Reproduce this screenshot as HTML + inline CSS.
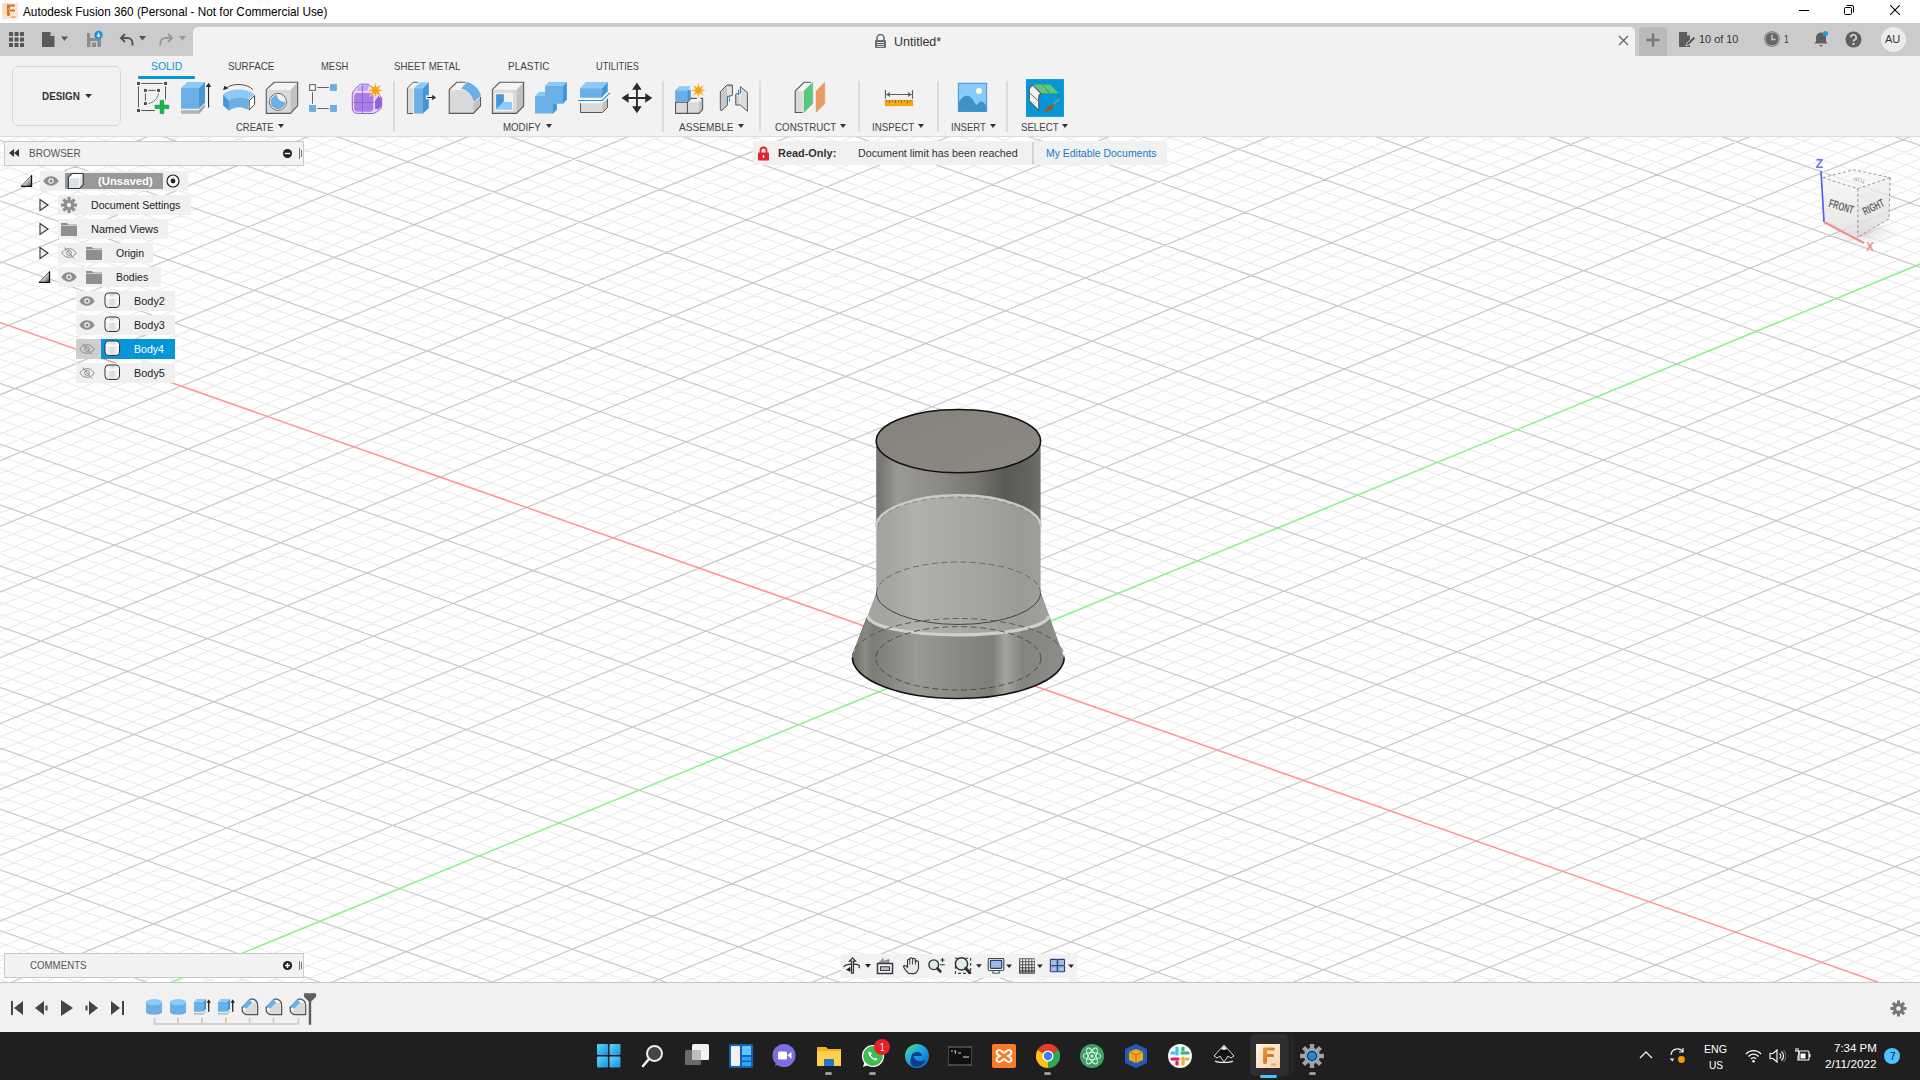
<!DOCTYPE html>
<html><head><meta charset="utf-8"><title>Autodesk Fusion 360</title><style>
*{margin:0;padding:0;box-sizing:border-box}
html,body{width:1920px;height:1080px;overflow:hidden;background:#fff;font-family:"Liberation Sans", sans-serif;}
.abs{position:absolute}
.t{position:absolute;white-space:nowrap;line-height:1}
</style></head>
<body>
<div class="abs" style="left:0;top:0;width:1920px;height:23px;background:#fff"></div>
<svg class="abs" style="left:2px;top:3px" width="16" height="16" viewBox="0 0 16 16">
<rect x="0" y="0" width="16" height="16" fill="#fbe5d0"/><rect x="1" y="1" width="6" height="10" fill="#f8d9bb"/>
<path d="M5 1.6h7a1 1 0 0 1 0 2H8v3h4a1 1 0 0 1 0 2H8v2.8a1.3 1.3 0 0 1-3 0z" fill="#d2731f"/><path d="M6 5l1.5 1.5V10" stroke="#f5b563" stroke-width="1" fill="none"/>
<rect x="9" y="13" width="4.5" height="2" fill="#f0b57c"/></svg>
<div class="t" style="left:23.00px;top:5.00px;font-size:13px;color:#000;transform:scaleX(0.9058);transform-origin:0 0;">Autodesk Fusion 360 (Personal - Not for Commercial Use)</div>
<div class="abs" style="left:1799px;top:10px;width:10px;height:1px;background:#000"></div>
<svg class="abs" style="left:1843px;top:4px" width="12" height="12" viewBox="0 0 12 12" fill="none" stroke="#000" stroke-width="1">
<rect x="1.5" y="3.5" width="7" height="7" rx="1"/><path d="M3.5 1.5h5.5a1.5 1.5 0 0 1 1.5 1.5v5.5"/></svg>
<svg class="abs" style="left:1889px;top:4px" width="12" height="12" viewBox="0 0 12 12" fill="none" stroke="#000" stroke-width="1.05">
<path d="M1.2 1.2L10.8 10.8M10.8 1.2L1.2 10.8"/></svg>
<div class="abs" style="left:0;top:23px;width:1920px;height:33px;background:#cbcbcb"></div>
<div class="abs" style="left:193px;top:27px;width:1442px;height:29px;background:#f2f2f2;border-radius:5px 5px 0 0"></div>
<div class="abs" style="left:1639px;top:27px;width:28px;height:29px;background:#bababa;border-radius:4px 4px 0 0"></div>
<svg class="abs" style="left:9px;top:32px" width="15" height="15" viewBox="0 0 15 15" fill="#555">
<rect x="0" y="0" width="4" height="4" rx=".6"/><rect x="5.5" y="0" width="4" height="4" rx=".6"/><rect x="11" y="0" width="4" height="4" rx=".6"/>
<rect x="0" y="5.5" width="4" height="4" rx=".6"/><rect x="5.5" y="5.5" width="4" height="4" rx=".6"/><rect x="11" y="5.5" width="4" height="4" rx=".6"/>
<rect x="0" y="11" width="4" height="4" rx=".6"/><rect x="5.5" y="11" width="4" height="4" rx=".6"/><rect x="11" y="11" width="4" height="4" rx=".6"/></svg>
<svg class="abs" style="left:41px;top:31px" width="30" height="17" viewBox="0 0 30 17">
<path d="M1 1h8.5l4 4V16H1z" fill="#5a5a5a"/><path d="M9.5 1v4h4" fill="#c9c9c9"/><path d="M20 5.5h7l-3.5 4.5z" fill="#5a5a5a"/></svg>
<svg class="abs" style="left:86px;top:30px" width="17" height="18" viewBox="0 0 17 18">
<path d="M1 3h12l2 2v12H1z" fill="#8c8c8c"/><rect x="4" y="3" width="7" height="5" fill="#c9c9c9"/><rect x="4.5" y="11" width="7" height="6" fill="#c9c9c9"/><rect x="6" y="12.5" width="4" height="4.5" fill="#8c8c8c"/>
<circle cx="12.5" cy="5" r="4.2" fill="#1e90e0"/><path d="M12.5 2.8v3.6M11 5l1.5 1.6L14 5" stroke="#fff" stroke-width="1.2" fill="none"/></svg>
<svg class="abs" style="left:119px;top:31px" width="30" height="16" viewBox="0 0 30 16">
<path d="M6 3L2 7l4 4M2.5 7H8.5a5 5 0 0 1 5 5v2.5" stroke="#555" stroke-width="2" fill="none"/><path d="M20 5h7l-3.5 4.5z" fill="#555"/></svg>
<svg class="abs" style="left:159px;top:31px" width="30" height="16" viewBox="0 0 30 16">
<path d="M9 3l4 4-4 4M12.5 7H6.5a5 5 0 0 0-5 5v2.5" stroke="#999" stroke-width="2" fill="none"/><path d="M20 5h7l-3.5 4.5z" fill="#999"/></svg>
<svg class="abs" style="left:874px;top:34px" width="13" height="14" viewBox="0 0 13 14">
<path d="M3 6V4a3.5 3.5 0 0 1 7 0v2" stroke="#6d6d6d" stroke-width="1.6" fill="none"/><rect x="1" y="6" width="11" height="8" rx="1" fill="#6d6d6d"/>
<path d="M3 8.5h7M3 10.5h7M3 12.5h7" stroke="#f1f1f1" stroke-width=".8"/></svg>
<div class="t" style="left:893.64px;top:35.00px;font-size:13px;color:#333;transform:scaleX(0.9589);transform-origin:0 0;">Untitled*</div>
<svg class="abs" style="left:1618px;top:35px" width="11" height="11" viewBox="0 0 11 11"><path d="M1 1l9 9M10 1l-9 9" stroke="#666" stroke-width="1.3"/></svg>
<svg class="abs" style="left:1645px;top:32px" width="16" height="16" viewBox="0 0 16 16"><path d="M8 1.5v13M1.5 8h13" stroke="#777" stroke-width="2.6"/></svg>
<svg class="abs" style="left:1678px;top:31px" width="19" height="17" viewBox="0 0 19 17">
<path d="M1 1h8l3 3.5V16H1z" fill="#5e5e5e"/><path d="M9 1v3.5h3" fill="#c9c9c9"/><path d="M8 15l1-3 6.5-6.5 2 2L11 14z" fill="#5e5e5e" stroke="#c9c9c9" stroke-width=".9"/></svg>
<div class="t" style="left:1698.60px;top:34.00px;font-size:11.5px;color:#333;transform:scaleX(0.9473);transform-origin:0 0;">10 of 10</div>
<svg class="abs" style="left:1763px;top:30px" width="18" height="18" viewBox="0 0 18 18">
<circle cx="9" cy="9" r="7.8" fill="#666"/><circle cx="9" cy="9" r="6.8" fill="none" stroke="#c9c9c9" stroke-width=".7"/><path d="M9 4.5V9.5h3.5" stroke="#c9c9c9" stroke-width="1.4" fill="none"/></svg>
<div class="t" style="left:1783.60px;top:34.00px;font-size:11.5px;color:#333;transform:scaleX(0.7333);transform-origin:0 0;">1</div>
<svg class="abs" style="left:1813px;top:30px" width="18" height="18" viewBox="0 0 18 18">
<path d="M8 2.5a5 5 0 0 0-5 5v4l-1.5 2h13l-1.5-2v-4a5 5 0 0 0-5-5z" fill="#5e5e5e"/><path d="M6.5 15a1.5 1.5 0 0 0 3 0z" fill="#5e5e5e"/><circle cx="12.5" cy="3.5" r="2.6" fill="#1d9bf0"/></svg>
<svg class="abs" style="left:1845px;top:31px" width="17" height="17" viewBox="0 0 17 17">
<circle cx="8.5" cy="8.5" r="8" fill="#5e5e5e"/><path d="M5.8 6.5a2.7 2.7 0 1 1 3.8 2.4c-.8.4-1.1.9-1.1 1.7" stroke="#c9c9c9" stroke-width="1.9" fill="none"/><circle cx="8.5" cy="13" r="1.2" fill="#c9c9c9"/></svg>
<div class="abs" style="left:1881px;top:27px;width:25px;height:25px;border-radius:50%;background:#ececec"></div>
<div class="t" style="left:1884.60px;top:34.00px;font-size:11.5px;color:#333;transform:scaleX(0.9572);transform-origin:0 0;">AU</div>
<div class="abs" style="left:0;top:56px;width:1920px;height:80px;background:#f2f2f2"></div>
<div class="abs" style="left:12px;top:66px;width:109px;height:60px;border:1.5px solid #d8d8d8;border-radius:6px"></div>
<div class="t" style="left:42.20px;top:91.00px;font-size:11.5px;font-weight:bold;color:#333;transform:scaleX(0.8587);transform-origin:0 0;">DESIGN</div>
<svg class="abs" style="left:85px;top:94px" width="7" height="4"><path d="M0 0h7L3.5 4z" fill="#333"/></svg>
<div class="t" style="left:151.25px;top:61.00px;font-size:11.5px;color:#0696d7;transform:scaleX(0.9048);transform-origin:0 0;">SOLID</div>
<div class="t" style="left:228.30px;top:61.00px;font-size:11.5px;color:#444;transform:scaleX(0.8528);transform-origin:0 0;">SURFACE</div>
<div class="t" style="left:321.00px;top:61.00px;font-size:11.5px;color:#444;transform:scaleX(0.8202);transform-origin:0 0;">MESH</div>
<div class="t" style="left:394.25px;top:61.00px;font-size:11.5px;color:#444;transform:scaleX(0.8414);transform-origin:0 0;">SHEET METAL</div>
<div class="t" style="left:507.50px;top:61.00px;font-size:11.5px;color:#444;transform:scaleX(0.8661);transform-origin:0 0;">PLASTIC</div>
<div class="t" style="left:595.50px;top:61.00px;font-size:11.5px;color:#444;transform:scaleX(0.8008);transform-origin:0 0;">UTILITIES</div>
<div class="abs" style="left:138px;top:76px;width:57px;height:3px;background:#0696d7;border-radius:1px"></div>
<div class="abs" style="left:393px;top:81px;width:2px;height:51px;background:#dcdcdc"></div>
<div class="abs" style="left:662px;top:81px;width:2px;height:51px;background:#dcdcdc"></div>
<div class="abs" style="left:759px;top:81px;width:2px;height:51px;background:#dcdcdc"></div>
<div class="abs" style="left:858px;top:81px;width:2px;height:51px;background:#dcdcdc"></div>
<div class="abs" style="left:937px;top:81px;width:2px;height:51px;background:#dcdcdc"></div>
<div class="abs" style="left:1006px;top:81px;width:2px;height:51px;background:#dcdcdc"></div>
<div class="t" style="left:235.50px;top:122.00px;font-size:11.5px;color:#444;transform:scaleX(0.8217);transform-origin:0 0;">CREATE</div>
<svg class="abs" style="left:278px;top:124px" width="6" height="4"><path d="M0 0h6L3 4z" fill="#333"/></svg>
<div class="t" style="left:503.30px;top:122.00px;font-size:11.5px;color:#444;transform:scaleX(0.8424);transform-origin:0 0;">MODIFY</div>
<svg class="abs" style="left:546px;top:124px" width="6" height="4"><path d="M0 0h6L3 4z" fill="#333"/></svg>
<div class="t" style="left:679.00px;top:122.00px;font-size:11.5px;color:#444;transform:scaleX(0.8792);transform-origin:0 0;">ASSEMBLE</div>
<svg class="abs" style="left:738px;top:124px" width="6" height="4"><path d="M0 0h6L3 4z" fill="#333"/></svg>
<div class="t" style="left:774.60px;top:122.00px;font-size:11.5px;color:#444;transform:scaleX(0.8481);transform-origin:0 0;">CONSTRUCT</div>
<svg class="abs" style="left:840px;top:124px" width="6" height="4"><path d="M0 0h6L3 4z" fill="#333"/></svg>
<div class="t" style="left:871.96px;top:122.00px;font-size:11.5px;color:#444;transform:scaleX(0.8440);transform-origin:0 0;">INSPECT</div>
<svg class="abs" style="left:918px;top:124px" width="6" height="4"><path d="M0 0h6L3 4z" fill="#333"/></svg>
<div class="t" style="left:951.17px;top:122.00px;font-size:11.5px;color:#444;transform:scaleX(0.8305);transform-origin:0 0;">INSERT</div>
<svg class="abs" style="left:990px;top:124px" width="6" height="4"><path d="M0 0h6L3 4z" fill="#333"/></svg>
<div class="t" style="left:1021.00px;top:122.00px;font-size:11.5px;color:#444;transform:scaleX(0.8387);transform-origin:0 0;">SELECT</div>
<svg class="abs" style="left:1062px;top:124px" width="6" height="4"><path d="M0 0h6L3 4z" fill="#333"/></svg>
<svg class="abs" style="left:135px;top:80px" width="80" height="37" viewBox="0 0 1920 888">
<g fill="#4d4d4d"><rect x="48" y="48" width="72" height="72"/><rect x="697" y="48" width="72" height="72"/><rect x="48" y="697" width="72" height="72"/>
<rect x="215" y="215" width="70" height="70"/><rect x="530" y="215" width="70" height="70"/><rect x="215" y="530" width="70" height="70"/></g>
<path d="M150 83H665M83 150V660M733 150V470M150 733H475M320 250H495M250 320V495" stroke="#555" stroke-width="24" fill="none"/>
<path d="M565 320C540 450 450 540 320 565" stroke="#555" stroke-width="18" fill="none"/>
<path d="M600 485H695V600H815V690H695V810H600V690H480V600H600Z" fill="#22b14c" stroke="#139a3c" stroke-width="10"/>
<path d="M1105 190L1250 48H1680L1535 190Z" fill="#8ccaf7"/><path d="M1105 190H1535V690H1105Z" fill="#6aafe6"/><path d="M1535 190L1680 48V545L1535 690Z" fill="#4596d4"/>
<path d="M1105 725H1535L1680 580V650L1540 810H1105Z" fill="#b3b3b3"/><path d="M1535 725L1680 580V650L1540 810Z" fill="#a5a5a5"/>
<path d="M1765 660V140" stroke="#2b2b2b" stroke-width="26"/><path d="M1700 165L1765 65L1830 165Z" fill="#2b2b2b"/></svg>
<svg class="abs" style="left:220px;top:80px" width="80" height="37" viewBox="0 0 1920 888">
<path d="M790 230C650 90 330 60 150 190" stroke="#333" stroke-width="20" fill="none"/><path d="M75 245L105 135L200 200Z" fill="#222"/>
<path d="M75 350C250 190 650 190 820 350L690 470C560 390 330 400 215 495Z" fill="#8ccaf7"/>
<path d="M215 495C330 400 560 390 690 470L665 715C520 620 330 640 215 740Z" fill="#6aafe6"/>
<path d="M75 350L215 495V740L75 610Z" fill="#4596d4"/>
<path d="M700 500L830 375V590L700 720Z" fill="#fff" stroke="#444" stroke-width="24"/>
<defs><clipPath id="hc"><circle cx="1390" cy="525" r="178"/></clipPath></defs>
<path d="M1110 230H1690V800H1110Z" fill="#dadada"/><path d="M1110 230L1300 55H1865L1690 240Z" fill="#f4f4f4"/><path d="M1690 240L1865 55V615L1690 800Z" fill="#c2c2c2"/>
<path d="M1110 230L1300 55H1865V615L1690 800H1110Z" fill="none" stroke="#585858" stroke-width="26"/>
<circle cx="1390" cy="525" r="205" fill="#f2f2f2" stroke="#555" stroke-width="20"/>
<g clip-path="url(#hc)"><circle cx="1390" cy="525" r="178" fill="#6aafe6"/><circle cx="1560" cy="330" r="200" fill="#f2f2f2"/></g></svg>
<svg class="abs" style="left:305px;top:80px" width="80" height="37" viewBox="0 0 1920 888">
<rect x="112" y="112" width="136" height="136" fill="#fff" stroke="#555" stroke-width="24"/>
<g fill="#67b0e6" stroke="#4a98d6" stroke-width="10"><rect x="605" y="105" width="155" height="150"/><rect x="105" y="605" width="155" height="155"/><rect x="605" y="605" width="155" height="155"/></g>
<path d="M295 180H570M180 295V570M295 685H570" stroke="#555" stroke-width="22"/>
<path d="M1135 340Q1150 240 1330 100H1520L1840 420V640Q1830 720 1640 805H1260Q1135 790 1135 660Z" fill="#e6d6fb" stroke="#8a5fc8" stroke-width="24"/>
<rect x="1180" y="310" width="460" height="450" rx="80" fill="#a87de6"/>
<path d="M1240 250Q1300 130 1400 125H1540L1500 260H1240Z" fill="#c8a2f7"/>
<path d="M1680 500L1760 390L1840 440V630L1760 700L1680 690Z" fill="#9163d6"/>
<path d="M1380 130V790M1160 540H1660M1760 390V700" stroke="#8a62c4" stroke-width="20"/>
<path d="M1690.0 45.0 L1720.6 176.1 L1835.0 105.0 L1763.9 219.4 L1895.0 250.0 L1763.9 280.6 L1835.0 395.0 L1720.6 323.9 L1690.0 455.0 L1659.4 323.9 L1545.0 395.0 L1616.1 280.6 L1485.0 250.0 L1616.1 219.4 L1545.0 105.0 L1659.4 176.1Z" fill="#f5a30f" stroke="#fbfbfb" stroke-width="8"/></svg>
<svg class="abs" style="left:403px;top:80px" width="80" height="37" viewBox="0 0 1920 888">
<path d="M105 195H240V805H105Z" fill="#dadada"/><path d="M105 195L245 55H355L265 195Z" fill="#f4f4f4"/>
<path d="M240 805H105V195L245 55H355" fill="none" stroke="#585858" stroke-width="24"/>
<path d="M265 195H480V805H265Z" fill="#6aafe6"/><path d="M265 195L405 55H620L480 195Z" fill="#8ccaf7"/><path d="M480 195L620 55V670L480 805Z" fill="#4596d4"/>
<rect x="550" y="370" width="90" height="90" fill="#fbfbfb"/>
<path d="M580 420H720" stroke="#2b2b2b" stroke-width="26"/><path d="M700 355L795 420L700 485Z" fill="#2b2b2b"/>
<path d="M1110 240H1400C1560 240 1690 370 1690 530V800H1110Z" fill="#dadada"/>
<path d="M1110 230L1290 55H1500L1390 210Z" fill="#f4f4f4"/>
<path d="M1390 210L1540 50C1700 90 1840 230 1870 375L1700 530C1670 370 1550 230 1390 210Z" fill="#6aafe6"/>
<path d="M1690 560L1860 410V620L1690 800Z" fill="#c2c2c2"/>
<path d="M1500 55H1290L1110 230V800H1690L1860 620V410" fill="none" stroke="#585858" stroke-width="26"/></svg>
<svg class="abs" style="left:488px;top:80px" width="80" height="37" viewBox="0 0 1920 888">
<path d="M105 230H680V800H105Z" fill="#dadada"/><path d="M105 230L280 55H855L680 240Z" fill="#f4f4f4"/><path d="M680 240L855 55V630L680 800Z" fill="#c2c2c2"/>
<path d="M105 230L280 55H855V630L680 800H105Z" fill="none" stroke="#585858" stroke-width="26"/>
<rect x="165" y="310" width="435" height="435" fill="#f2f2f2"/>
<path d="M195 340H380V520L195 700Z" fill="#4596d4"/><path d="M195 700L380 525H575V715H195Z" fill="#8ccaf7"/>
<path d="M1130 390L1230 290H1370V145L1460 55H1890V470L1800 570H1650V715L1560 805H1130Z" fill="#6aafe6"/>
<path d="M1130 390L1225 295H1370V385H1130Z" fill="#8ccaf7"/><path d="M1370 145L1465 55H1890L1800 145Z" fill="#8ccaf7"/>
<path d="M1800 145L1890 55V470L1800 565Z" fill="#4596d4"/><path d="M1560 575H1650V715L1560 805Z" fill="#4596d4"/></svg>
<svg class="abs" style="left:574px;top:80px" width="80" height="37" viewBox="0 0 1920 888">
<path d="M145 195H675V425H145Z" fill="#6aafe6"/><path d="M145 195L290 50H810L675 195Z" fill="#8ccaf7"/><path d="M675 195L810 50V270L660 425Z" fill="#4596d4"/>
<path d="M95 490H680L860 310" stroke="#fbfbfb" stroke-width="64" fill="none"/>
<path d="M95 490H680L860 310" stroke="#1e8fe6" stroke-width="26" fill="none"/>
<path d="M150 560H680V780H150Z" fill="#dadada"/><path d="M680 560L805 450V660L680 780Z" fill="#c2c2c2"/>
<path d="M155 555V780H680L805 660V450" fill="none" stroke="#585858" stroke-width="24"/>
<path d="M1510 190V700M1250 430H1760" stroke="#fbfbfb" stroke-width="90"/>
<path d="M1510 190V700M1250 430H1760" stroke="#2b2b2b" stroke-width="46"/>
<path d="M1395 235L1510 60L1625 235ZM1395 630L1510 800L1625 630ZM1310 315L1140 430L1310 545ZM1710 315L1880 430L1710 545Z" fill="#2b2b2b"/></svg>
<svg class="abs" style="left:672px;top:80px" width="80" height="37" viewBox="0 0 1920 888">
<path d="M85 530H370V800H85Z" fill="#dadada"/><path d="M370 530H650V800H370Z" fill="#dadada"/>
<path d="M370 530L455 440H735L650 530Z" fill="#f4f4f4"/><path d="M650 530L735 440V710L650 800Z" fill="#c2c2c2"/>
<path d="M595 440H455L370 530V800M85 530V800H650L735 710V440H680M85 530H370" fill="none" stroke="#585858" stroke-width="26"/>
<path d="M75 250L175 150H450V190L365 250Z" fill="#8ccaf7"/><path d="M75 250H365V525H75Z" fill="#6aafe6"/><path d="M365 250L450 190V430L365 520Z" fill="#4596d4"/>
<path d="M410 240L450 180" stroke="#fbfbfb" stroke-width="30"/>
<path d="M635.0 50.0 L663.7 180.7 L776.4 108.6 L704.3 221.3 L835.0 250.0 L704.3 278.7 L776.4 391.4 L663.7 319.3 L635.0 450.0 L606.3 319.3 L493.6 391.4 L565.7 278.7 L435.0 250.0 L565.7 221.3 L493.6 108.6 L606.3 180.7Z" fill="#f5a30f" stroke="#fbfbfb" stroke-width="8"/>
<path d="M1160 280L1320 120H1450V370L1330 400V610L1180 740Z" fill="#c8c8c8"/>
<path d="M1320 120H1450V370H1320Z" fill="#e2e2e2"/><ellipse cx="1385" cy="140" rx="60" ry="30" fill="#bbb"/>
<path d="M1160 280L1320 120H1450V370L1330 400V610L1180 740L1160 720Z" fill="none" stroke="#585858" stroke-width="24"/>
<path d="M1380 410V520" stroke="#1e8fe6" stroke-width="24"/>
<path d="M1640 160L1810 300V750L1640 600Z" fill="#dcdcdc"/><path d="M1520 340L1620 320V600H1520Z" fill="#d0d0d0"/><ellipse cx="1590" cy="360" rx="55" ry="30" fill="#f0f0f0"/>
<path d="M1640 320V160L1810 300V750L1640 600H1530V340L1620 320" fill="none" stroke="#585858" stroke-width="24"/>
<path d="M1595 240V370" stroke="#1e8fe6" stroke-width="24"/></svg>
<svg class="abs" style="left:790px;top:80px" width="80" height="37" viewBox="0 0 1920 888">
<path d="M125 265H305V780H125Z" fill="#dadada"/><path d="M125 265L335 55H500L330 265Z" fill="#f4f4f4"/>
<path d="M305 780H125V265L335 55H500" fill="none" stroke="#585858" stroke-width="26"/>
<path d="M335 265L545 55V570L335 780Z" fill="#5bc77e" stroke="#4bb56d" stroke-width="8"/>
<path d="M625 265L835 55V570L625 780Z" fill="#e89c63" stroke="#d88a50" stroke-width="8"/></svg>
<svg class="abs" style="left:880px;top:78px" width="80" height="37" viewBox="0 0 1920 888">
<path d="M130 290V495M780 290V495M150 395H760" stroke="#5e5e5e" stroke-width="26" fill="none"/>
<path d="M150 395L235 335V455ZM760 395L675 335V455Z" fill="#5e5e5e"/>
<rect x="120" y="530" width="670" height="140" fill="#f7a90a" stroke="#e08f00" stroke-width="8"/>
<path d="M155 535V570M227 535V600M299 535V570M371 535V600M443 535V570M515 535V600M587 535V570M659 535V600M731 535V570" stroke="#5e5e5e" stroke-width="20"/></svg>
<svg class="abs" style="left:955px;top:78px" width="80" height="37" viewBox="0 0 1920 888">
<rect x="80" y="125" width="680" height="680" fill="#87cbfd" stroke="#3d8fcc" stroke-width="22"/>
<path d="M91 580C180 430 320 350 430 520C480 600 505 660 525 650C560 590 610 530 680 580C720 610 735 650 749 670V794H91Z" fill="#3f91ca"/>
<circle cx="575" cy="310" r="72" fill="#fdfdd0"/></svg>
<svg class="abs" style="left:1020px;top:78px" width="50" height="42" viewBox="0 0 1286 1080.24">
<rect x="155" y="28" width="975" height="972" fill="#0696d7"/>
<path d="M330 185Q360 160 420 160H770L1010 400H540Z" fill="#5bc77e" stroke="#3e9a5a" stroke-width="14"/>
<path d="M570 170L770 395" stroke="#3e8a55" stroke-width="22"/>
<path d="M330 185Q240 240 240 330V590L480 830V480Q480 430 540 400Z" fill="#f2f2f2" stroke="#5a5a5a" stroke-width="26"/>
<path d="M240 380L475 590" stroke="#5a5a5a" stroke-width="24"/>
<path d="M600 860C680 760 760 690 830 680C880 700 870 760 840 790C780 850 680 870 600 860Z" fill="#9a5a22"/>
<path d="M880 670L1010 540" stroke="#8a8a8a" stroke-width="56"/></svg>
<svg class="abs" style="left:0;top:137px" width="1920" height="845" viewBox="0 0 1920 845">
<path d="M-1161.85 458.55L1031.44 1228.93M-1129.93 445.44L1063.36 1215.82M-1113.96 438.88L1079.33 1209.26M-1098.00 432.33L1095.29 1202.71M-1082.03 425.77L1111.26 1196.15M-1050.11 412.66L1143.18 1183.04M-1034.14 406.10L1159.15 1176.48M-1018.18 399.55L1175.11 1169.93M-1002.21 392.99L1191.08 1163.37M-970.29 379.88L1223.00 1150.26M-954.32 373.32L1238.97 1143.70M-938.36 366.77L1254.93 1137.15M-922.39 360.21L1270.90 1130.59M-890.47 347.10L1302.82 1117.48M-874.50 340.54L1318.79 1110.92M-858.54 333.99L1334.75 1104.37M-842.57 327.43L1350.72 1097.81M-810.65 314.32L1382.64 1084.70M-794.68 307.76L1398.61 1078.14M-778.72 301.21L1414.57 1071.59M-762.75 294.65L1430.54 1065.03M-730.83 281.54L1462.46 1051.92M-714.86 274.98L1478.43 1045.36M-698.90 268.43L1494.39 1038.81M-682.93 261.87L1510.36 1032.25M-651.01 248.76L1542.28 1019.14M-635.04 242.20L1558.25 1012.58M-619.08 235.65L1574.21 1006.03M-603.11 229.09L1590.18 999.47M-571.19 215.98L1622.10 986.36M-555.22 209.42L1638.07 979.80M-539.26 202.87L1654.03 973.25M-523.29 196.31L1670.00 966.69M-491.37 183.20L1701.92 953.58M-475.40 176.64L1717.89 947.02M-459.44 170.09L1733.85 940.47M-443.47 163.53L1749.82 933.91M-411.55 150.42L1781.74 920.80M-395.58 143.86L1797.71 914.24M-379.62 137.31L1813.67 907.69M-363.65 130.75L1829.64 901.13M-331.73 117.64L1861.56 888.02M-315.76 111.08L1877.53 881.46M-299.80 104.53L1893.49 874.91M-283.83 97.97L1909.46 868.35M-251.91 84.86L1941.38 855.24M-235.94 78.30L1957.35 848.68M-219.98 71.75L1973.31 842.13M-204.01 65.19L1989.28 835.57M-172.09 52.08L2021.20 822.46M-156.12 45.52L2037.17 815.90M-140.16 38.97L2053.13 809.35M-124.19 32.41L2069.10 802.79M-92.27 19.30L2101.02 789.68M-76.30 12.74L2116.99 783.12M-60.34 6.19L2132.95 776.57M-44.37 -0.37L2148.92 770.01M-12.45 -13.48L2180.84 756.90M3.52 -20.04L2196.81 750.34M19.48 -26.59L2212.77 743.79M35.45 -33.15L2228.74 737.23M67.37 -46.26L2260.66 724.12M83.34 -52.82L2276.63 717.56M99.30 -59.37L2292.59 711.01M115.27 -65.93L2308.56 704.45M147.19 -79.04L2340.48 691.34M163.16 -85.60L2356.45 684.78M179.12 -92.15L2372.41 678.23M195.09 -98.71L2388.38 671.67M227.01 -111.82L2420.30 658.56M242.98 -118.38L2436.27 652.00M258.94 -124.93L2452.23 645.45M274.91 -131.49L2468.20 638.89M306.83 -144.60L2500.12 625.78M322.80 -151.16L2516.09 619.22M338.76 -157.71L2532.05 612.67M354.73 -164.27L2548.02 606.11M386.65 -177.38L2579.94 593.00M402.62 -183.94L2595.91 586.44M418.58 -190.49L2611.87 579.89M434.55 -197.05L2627.84 573.33M466.47 -210.16L2659.76 560.22M482.44 -216.72L2675.73 553.66M498.40 -223.27L2691.69 547.11M514.37 -229.83L2707.66 540.55M546.29 -242.94L2739.58 527.44M562.26 -249.50L2755.55 520.88M578.22 -256.05L2771.51 514.33M594.19 -262.61L2787.48 507.77M626.11 -275.72L2819.40 494.66M642.08 -282.28L2835.37 488.10M658.04 -288.83L2851.33 481.55M674.01 -295.39L2867.30 474.99M705.93 -308.50L2899.22 461.88M721.90 -315.06L2915.19 455.32M737.86 -321.61L2931.15 448.77M753.83 -328.17L2947.12 442.21M785.75 -341.28L2979.04 429.10M801.72 -347.84L2995.01 422.54M817.68 -354.39L3010.97 415.99M833.65 -360.95L3026.94 409.43M865.57 -374.06L3058.86 396.32M881.54 -380.62L3074.83 389.76M-1161.85 458.55L881.54 -380.62M-1127.31 470.68L916.08 -368.49M-1110.04 476.75L933.35 -362.42M-1092.77 482.81L950.62 -356.35M-1075.50 488.88L967.89 -350.29M-1040.96 501.01L1002.43 -338.16M-1023.69 507.08L1019.70 -332.09M-1006.42 513.14L1036.97 -326.02M-989.15 519.21L1054.24 -319.96M-954.61 531.34L1088.78 -307.83M-937.34 537.41L1106.05 -301.76M-920.07 543.47L1123.32 -295.69M-902.80 549.54L1140.59 -289.63M-868.26 561.67L1175.13 -277.50M-850.99 567.74L1192.40 -271.43M-833.72 573.80L1209.67 -265.36M-816.45 579.87L1226.94 -259.30M-781.91 592.00L1261.48 -247.17M-764.64 598.07L1278.75 -241.10M-747.37 604.13L1296.02 -235.03M-730.10 610.20L1313.29 -228.97M-695.56 622.33L1347.83 -216.84M-678.29 628.40L1365.10 -210.77M-661.02 634.46L1382.37 -204.70M-643.75 640.53L1399.64 -198.64M-609.21 652.66L1434.18 -186.51M-591.94 658.73L1451.45 -180.44M-574.67 664.79L1468.72 -174.37M-557.40 670.86L1485.99 -168.31M-522.86 682.99L1520.53 -156.18M-505.59 689.06L1537.80 -150.11M-488.32 695.12L1555.07 -144.04M-471.05 701.19L1572.34 -137.98M-436.51 713.32L1606.88 -125.85M-419.24 719.39L1624.15 -119.78M-401.97 725.45L1641.42 -113.71M-384.70 731.52L1658.69 -107.65M-350.16 743.65L1693.23 -95.52M-332.89 749.72L1710.50 -89.45M-315.62 755.78L1727.77 -83.38M-298.35 761.85L1745.04 -77.32M-263.81 773.98L1779.58 -65.19M-246.54 780.05L1796.85 -59.12M-229.27 786.11L1814.12 -53.05M-212.00 792.18L1831.39 -46.99M-177.46 804.31L1865.93 -34.86M-160.19 810.38L1883.20 -28.79M-142.92 816.44L1900.47 -22.72M-125.65 822.51L1917.74 -16.66M-91.11 834.64L1952.28 -4.53M-73.84 840.71L1969.55 1.54M-56.57 846.77L1986.82 7.61M-39.30 852.84L2004.09 13.67M-4.76 864.97L2038.63 25.80M12.51 871.04L2055.90 31.87M29.78 877.10L2073.17 37.94M47.05 883.17L2090.44 44.00M81.59 895.30L2124.98 56.13M98.86 901.37L2142.25 62.20M116.13 907.43L2159.52 68.27M133.40 913.50L2176.79 74.33M167.94 925.63L2211.33 86.46M185.21 931.70L2228.60 92.53M202.48 937.76L2245.87 98.60M219.75 943.83L2263.14 104.66M254.29 955.96L2297.68 116.79M271.56 962.03L2314.95 122.86M288.83 968.09L2332.22 128.93M306.10 974.16L2349.49 134.99M340.64 986.29L2384.03 147.12M357.91 992.36L2401.30 153.19M375.18 998.42L2418.57 159.26M392.45 1004.49L2435.84 165.32M426.99 1016.62L2470.38 177.45M444.26 1022.69L2487.65 183.52M461.53 1028.75L2504.92 189.59M478.80 1034.82L2522.19 195.65M513.34 1046.95L2556.73 207.78M530.61 1053.02L2574.00 213.85M547.88 1059.08L2591.27 219.92M565.15 1065.15L2608.54 225.98M599.69 1077.28L2643.08 238.11M616.96 1083.35L2660.35 244.18M634.23 1089.41L2677.62 250.25M651.50 1095.48L2694.89 256.31M686.04 1107.61L2729.43 268.44M703.31 1113.68L2746.70 274.51M720.58 1119.74L2763.97 280.58M737.85 1125.81L2781.24 286.64M772.39 1137.94L2815.78 298.77M789.66 1144.01L2833.05 304.84M806.93 1150.07L2850.32 310.91M824.20 1156.14L2867.59 316.97M858.74 1168.27L2902.13 329.10M876.01 1174.34L2919.40 335.17M893.28 1180.40L2936.67 341.24M910.55 1186.47L2953.94 347.30M945.09 1198.60L2988.48 359.43M962.36 1204.67L3005.75 365.50M979.63 1210.73L3023.02 371.57M996.90 1216.80L3040.29 377.63M1031.44 1228.93L3074.83 389.76" stroke="#ececec" stroke-width="1.2" fill="none"/>
<path d="M-1145.89 451.99L1047.40 1222.38M-1066.07 419.21L1127.22 1189.60M-986.25 386.43L1207.04 1156.82M-906.43 353.65L1286.86 1124.04M-826.61 320.87L1366.68 1091.26M-746.79 288.09L1446.50 1058.48M-666.97 255.31L1526.32 1025.70M-587.15 222.53L1606.14 992.92M-507.33 189.75L1685.96 960.14M-427.51 156.97L1765.78 927.36M-347.69 124.19L1845.60 894.58M-188.05 58.63L2005.24 829.02M-108.23 25.85L2085.06 796.24M-28.41 -6.93L2164.88 763.46M51.41 -39.71L2244.70 730.68M131.23 -72.49L2324.52 697.90M211.05 -105.27L2404.34 665.12M290.87 -138.05L2484.16 632.34M370.69 -170.83L2563.98 599.56M450.51 -203.61L2643.80 566.78M530.33 -236.39L2723.62 534.00M610.15 -269.17L2803.44 501.22M689.97 -301.95L2883.26 468.44M769.79 -334.73L2963.08 435.66M849.61 -367.51L3042.90 402.88M-1144.58 464.62L898.81 -374.55M-1058.23 494.95L985.16 -344.22M-971.88 525.28L1071.51 -313.89M-885.53 555.61L1157.86 -283.56M-799.18 585.94L1244.21 -253.23M-712.83 616.27L1330.56 -222.90M-626.48 646.60L1416.91 -192.57M-540.13 676.93L1503.26 -162.24M-453.78 707.26L1589.61 -131.91M-367.43 737.59L1675.96 -101.58M-281.08 767.92L1762.31 -71.25M-194.73 798.25L1848.66 -40.92M-108.38 828.58L1935.01 -10.59M-22.03 858.91L2021.36 19.74M150.67 919.57L2194.06 80.40M237.02 949.90L2280.41 110.73M323.37 980.23L2366.76 141.06M409.72 1010.56L2453.11 171.39M496.07 1040.89L2539.46 201.72M582.42 1071.22L2625.81 232.05M668.77 1101.55L2712.16 262.38M755.12 1131.88L2798.51 292.71M841.47 1162.21L2884.86 323.04M927.82 1192.54L2971.21 353.37M1014.17 1222.87L3057.56 383.70" stroke="#c8c8c8" stroke-width="1.2" fill="none"/>
<path d="M-267.87 91.41L1925.42 861.80" stroke="#ff9494" stroke-width="1.5" fill="none"/>
<path d="M64.32 889.24L2107.71 50.07" stroke="#88f088" stroke-width="1.5" fill="none"/>
</svg>
<div class="abs" style="left:0;top:136px;width:1920px;height:1px;background:#dcdcdc"></div>
<svg class="abs" style="left:840px;top:400px" width="240" height="310" viewBox="840 400 240 310">
<defs>
<linearGradient id="gTop" x1="876" x2="1041" y1="0" y2="0" gradientUnits="userSpaceOnUse">
<stop offset="0" stop-color="#72716c"/><stop offset=".05" stop-color="#7e7d78"/><stop offset=".13" stop-color="#9a9994"/><stop offset=".4" stop-color="#8a8984"/><stop offset=".6" stop-color="#77766f"/><stop offset=".78" stop-color="#5b5954"/><stop offset=".93" stop-color="#64635e"/><stop offset="1" stop-color="#72716c"/></linearGradient>
<linearGradient id="gMid" x1="852" x2="1065" y1="0" y2="0" gradientUnits="userSpaceOnUse">
<stop offset="0" stop-color="#a7a7a3"/><stop offset=".15" stop-color="#a3a39f"/><stop offset=".3" stop-color="#b0b0ac"/><stop offset=".55" stop-color="#a6a6a2"/><stop offset=".8" stop-color="#9b9a96"/><stop offset="1" stop-color="#a5a5a1"/></linearGradient>
<linearGradient id="gCone" x1="852" x2="1065" y1="0" y2="0" gradientUnits="userSpaceOnUse">
<stop offset="0" stop-color="#6e6d68"/><stop offset=".06" stop-color="#8a8984"/><stop offset=".1" stop-color="#7c7b76"/><stop offset=".3" stop-color="#9a9994"/><stop offset=".5" stop-color="#8a8883"/><stop offset=".66" stop-color="#807e79"/><stop offset=".72" stop-color="#a3a29d"/><stop offset=".8" stop-color="#858480"/><stop offset="1" stop-color="#8e8d88"/></linearGradient>
<linearGradient id="gFace" x1="0" x2="1" y1="0" y2="1">
<stop offset="0" stop-color="#85837d"/><stop offset=".5" stop-color="#88867f"/><stop offset="1" stop-color="#8b8983"/></linearGradient>
</defs>
<!-- cone lower -->
<path d="M876.5 593 L852.4 657.5 A105.9 41 0 0 0 1064.2 657.5 L1041 593 Z" fill="url(#gCone)"/>
<!-- translucent middle (upper ring to lower ring) -->
<path d="M876.3 527 A82.1 31.6 0 0 1 1040.6 527 L1040.6 593 L1048.6 615.8 A90.4 19 0 0 1 867.8 615.8 L876.3 593 Z" fill="url(#gMid)"/>
<!-- dark upper cylinder -->
<path d="M876.2 441 L876.2 527 A82.2 31.6 0 0 1 1040.6 527 L1040.6 441 Z" fill="url(#gTop)"/>
<!-- top face -->
<ellipse cx="958.4" cy="441.1" rx="82.2" ry="31.7" fill="url(#gFace)" stroke="#111" stroke-width="1.5"/>
<!-- light rings -->
<path d="M876.3 527 A82.1 31.6 0 0 1 1040.6 527" fill="none" stroke="#c9c9c6" stroke-width="2.6"/>
<path d="M878 527 A80.5 30 0 0 1 1039 527" fill="none" stroke="#6d6d6a" stroke-width=".8" stroke-dasharray="5 4" opacity=".8"/>
<path d="M867.8 615.8 A90.4 19 0 0 0 1048.6 615.8" fill="none" stroke="#d0d0ce" stroke-width="3.2"/>
<!-- mid ellipse: dashed top half, solid bottom -->
<path d="M876.5 593 A82 31 0 0 1 1040.5 593" fill="none" stroke="#5a5a58" stroke-width=".8" stroke-dasharray="6 3.5"/>
<path d="M876.5 593 A82 31.5 0 0 0 1040.5 593" fill="none" stroke="#444" stroke-width="1"/>
<!-- bottom hidden back arc -->
<path d="M852.4 657.5 A105.9 39 0 0 1 1064.2 657.5" fill="none" stroke="#4a4a48" stroke-width=".8" stroke-dasharray="6 3.5"/>
<!-- inner dashed circle -->
<ellipse cx="958.4" cy="658.3" rx="82.5" ry="31.7" fill="none" stroke="#3e3e3c" stroke-width=".8" stroke-dasharray="6 3.5"/>
<!-- silhouettes -->
<path d="M852.4 657.5 A105.9 41 0 0 0 1064.2 657.5" fill="none" stroke="#111" stroke-width="1.6"/>
<path d="M866.8 618 L852.6 655" stroke="#2a2a2a" stroke-width=".9" opacity=".8"/>
</svg>
<svg class="abs" style="left:1790px;top:150px" width="130" height="110" viewBox="1790 150 130 110">
<defs><radialGradient id="shd" cx=".5" cy=".5" r=".5"><stop offset="0" stop-color="#000" stop-opacity=".13"/><stop offset="1" stop-color="#000" stop-opacity="0"/></radialGradient>
<linearGradient id="cf" x1="0" y1="0" x2="0" y2="1"><stop offset="0" stop-color="#f4f4f4" stop-opacity=".72"/><stop offset="1" stop-color="#e2e2e2" stop-opacity=".85"/></linearGradient>
<linearGradient id="cr" x1="0" y1="0" x2="0" y2="1"><stop offset="0" stop-color="#eeeeee" stop-opacity=".72"/><stop offset="1" stop-color="#dcdcdc" stop-opacity=".85"/></linearGradient></defs>
<ellipse cx="1862" cy="232" rx="36" ry="13" fill="url(#shd)"/>
<path d="M1822.8 177.6 L1857.8 188.6 L1890.2 177.6 L1853.9 169.8 Z" fill="#f6f6f6" fill-opacity=".7"/>
<path d="M1822.8 177.6 L1857.8 188.6 L1857.8 237.2 L1824 221.7 Z" fill="url(#cf)"/>
<path d="M1857.8 188.6 L1890.2 177.6 L1888.9 219 L1857.8 237.2 Z" fill="url(#cr)"/>
<path d="M1822.8 177.6 L1853.9 169.8 L1890.2 177.6 M1822.8 177.6 L1857.8 188.6 L1890.2 177.6 M1857.8 188.6 V237.2 M1890.2 177.6 L1888.9 219 L1857.8 237.2" stroke="#7a7a7a" stroke-width=".75" stroke-dasharray="3 2.2" fill="none"/>
<text x="0" y="0" font-size="10" fill="#6a6a6a" font-weight="bold" font-family="Liberation Sans" transform="translate(1828 206.5) rotate(17) scale(.74 1.15)">FRONT</text>
<text x="0" y="0" font-size="10" fill="#6a6a6a" font-weight="bold" font-family="Liberation Sans" transform="translate(1865 215.5) rotate(-26) scale(.72 1.15)">RIGHT</text>
<text x="0" y="0" font-size="6" fill="#9a9a9a" font-family="Liberation Sans" transform="translate(1866 180) rotate(200)">TOP</text>
<path d="M1821 171 L1824 222" stroke="#5a5aff" stroke-width="1.7"/>
<path d="M1824 222 L1864 243" stroke="#ef8f8f" stroke-width="2.2"/>
<text x="1815.5" y="168" font-size="12.5" font-weight="bold" fill="#7070f8" font-family="Liberation Sans">Z</text>
<text x="1866" y="251" font-size="12" font-weight="bold" fill="#f29090" font-family="Liberation Sans">X</text>
</svg>
<div class="abs" style="left:753px;top:141px;width:414px;height:24px;background:#f1f1f1"></div>
<div class="abs" style="left:1032px;top:142px;width:1.5px;height:22px;background:#d2d2d2"></div>
<svg class="abs" style="left:757px;top:146px" width="13" height="15" viewBox="0 0 13 15"><path d="M3.5 7V4.5a3 3 0 0 1 6 0V7" stroke="#e0262a" stroke-width="1.8" fill="none"/><rect x="1" y="6.5" width="11" height="8" rx="1" fill="#e0262a"/><rect x="5.8" y="9" width="1.4" height="3" fill="#fff"/></svg>
<div class="t" style="left:778.40px;top:148.00px;font-size:11.5px;font-weight:bold;color:#333;transform:scaleX(0.9502);transform-origin:0 0;">Read-Only:</div>
<div class="t" style="left:858.00px;top:148.00px;font-size:11.5px;color:#333;transform:scaleX(0.9320);transform-origin:0 0;">Document limit has been reached</div>
<div class="t" style="left:1046.00px;top:148.00px;font-size:11.5px;color:#1a7ac6;transform:scaleX(0.9089);transform-origin:0 0;">My Editable Documents</div>
<div class="abs" style="left:4px;top:141px;width:300px;height:25px;background:#f2f2f2;border:1px solid #c9c9c9"></div>
<svg class="abs" style="left:9px;top:149px" width="11" height="8" viewBox="0 0 11 8"><path d="M0 4l5-4v8zM5 4l5-4v8z" fill="#333"/></svg>
<div class="t" style="left:29.10px;top:148.00px;font-size:11px;color:#555;transform:scaleX(0.9105);transform-origin:0 0;">BROWSER</div>
<svg class="abs" style="left:282px;top:148px" width="20" height="11" viewBox="0 0 20 11"><circle cx="5.5" cy="5.5" r="4.5" fill="#222"/><rect x="2.8" y="4.8" width="5.4" height="1.4" fill="#fff"/><path d="M17.5 0v11M19.5 2v7" stroke="#666" stroke-width=".9"/></svg>
<div class="abs" style="left:40px;top:171px;width:148px;height:20px;background:#f0f0f0"></div>
<svg class="abs" style="left:18px;top:170px" width="16" height="20" viewBox="0 0 384 480"><defs><linearGradient id="tdg" x1="0" y1="0" x2="1" y2="1"><stop offset=".35" stop-color="#fafafa"/><stop offset=".7" stop-color="#a0a0a0"/><stop offset="1" stop-color="#404040"/></linearGradient></defs><path d="M75 390L325 130V395Z" fill="url(#tdg)"/><path d="M75 390L325 130" stroke="#2a2a2a" stroke-width="16"/><path d="M325 125V395H70" stroke="#111" stroke-width="30" fill="none"/></svg>
<svg class="abs" style="left:43px;top:173px" width="16" height="16" viewBox="0 0 16 16"><path d="M0.3 8C2.5 4.6 5 3.3 8 3.3S13.5 4.6 15.7 8C13.5 11.4 11 12.7 8 12.7S2.5 11.4 0.3 8z" fill="#8e8e8e"/><circle cx="8" cy="8" r="2.8" fill="#efefef"/><circle cx="8" cy="8" r="1.6" fill="#8e8e8e"/></svg>
<div class="abs" style="left:65px;top:173px;width:98px;height:16px;background:#999"></div>
<svg class="abs" style="left:66px;top:172px" width="20" height="18" viewBox="0 0 480 432"><g transform="translate(-1152 -48)"><path d="M1215 180L1300 85H1560V345L1475 435H1215Z" fill="#fafbfc"/><path d="M1485 190L1560 110V340L1485 420Z" fill="#dfe3ea"/><path d="M1228 192H1462V428H1228Z" fill="#dde1e8"/><path d="M1208 178L1295 85H1565V350L1478 442H1208Z" stroke="#333" stroke-width="26" fill="none" stroke-linejoin="round"/></g></svg>
<div class="t" style="left:98.00px;top:176.00px;font-size:11.5px;font-weight:bold;color:#fff;transform:scaleX(0.9845);transform-origin:0 0;">(Unsaved)</div>
<svg class="abs" style="left:166px;top:174px" width="14" height="14" viewBox="0 0 14 14"><circle cx="7" cy="7" r="6" fill="#fff" stroke="#222" stroke-width="1.2"/><circle cx="7" cy="7" r="2.4" fill="#222"/></svg>
<div class="abs" style="left:58px;top:195px;width:133px;height:20px;background:#f0f0f0"></div>
<svg class="abs" style="left:39px;top:198px" width="11" height="14" viewBox="0 0 11 14"><path d="M1 1.5L9 7 1 12.5z" fill="#f0f0f0" stroke="#333" stroke-width="1.1"/></svg>
<svg class="abs" style="left:61px;top:197px" width="16" height="16" viewBox="0 0 16 16"><g transform="translate(8 8)"><circle r="5.2" fill="#8f8f8f"/><g fill="#8f8f8f"><rect x="-1.6" y="-8" width="3.2" height="4" transform="rotate(0)"/><rect x="-1.6" y="-8" width="3.2" height="4" transform="rotate(45)"/><rect x="-1.6" y="-8" width="3.2" height="4" transform="rotate(90)"/><rect x="-1.6" y="-8" width="3.2" height="4" transform="rotate(135)"/><rect x="-1.6" y="-8" width="3.2" height="4" transform="rotate(180)"/><rect x="-1.6" y="-8" width="3.2" height="4" transform="rotate(225)"/><rect x="-1.6" y="-8" width="3.2" height="4" transform="rotate(270)"/><rect x="-1.6" y="-8" width="3.2" height="4" transform="rotate(315)"/></g><circle r="2.2" fill="#f0f0f0"/></g></svg>
<div class="t" style="left:91.00px;top:200.00px;font-size:11.5px;color:#222;transform:scaleX(0.9198);transform-origin:0 0;">Document Settings</div>
<div class="abs" style="left:58px;top:219px;width:110px;height:20px;background:#f0f0f0"></div>
<svg class="abs" style="left:39px;top:222px" width="11" height="14" viewBox="0 0 11 14"><path d="M1 1.5L9 7 1 12.5z" fill="#f0f0f0" stroke="#333" stroke-width="1.1"/></svg>
<svg class="abs" style="left:61px;top:221px" width="16" height="16" viewBox="0 0 16 16"><path d="M0 2h6l1 1.5h9V15H0z" fill="#8f8f8f"/><path d="M0 4.5h16" stroke="#f0f0f0" stroke-width=".6"/></svg>
<div class="t" style="left:91.00px;top:224.00px;font-size:11.5px;color:#222;transform:scaleX(0.9537);transform-origin:0 0;">Named Views</div>
<div class="abs" style="left:58px;top:243px;width:95px;height:20px;background:#f0f0f0"></div>
<svg class="abs" style="left:39px;top:246px" width="11" height="14" viewBox="0 0 11 14"><path d="M1 1.5L9 7 1 12.5z" fill="#f0f0f0" stroke="#333" stroke-width="1.1"/></svg>
<svg class="abs" style="left:61px;top:245px" width="16" height="16" viewBox="0 0 16 16"><path d="M0.8 8C2.8 4.9 5.2 3.7 8 3.7S13.2 4.9 15.2 8C13.2 11.1 10.8 12.3 8 12.3S2.8 11.1 0.8 8z" fill="none" stroke="#8e8e8e" stroke-width="1"/><circle cx="8" cy="8" r="2.4" fill="none" stroke="#8e8e8e" stroke-width="1"/><path d="M3.5 2.5l9.5 11" stroke="#8e8e8e" stroke-width="1"/></svg>
<svg class="abs" style="left:86px;top:245px" width="16" height="16" viewBox="0 0 16 16"><path d="M0 2h6l1 1.5h9V15H0z" fill="#8f8f8f"/><path d="M0 4.5h16" stroke="#f0f0f0" stroke-width=".6"/></svg>
<div class="t" style="left:115.90px;top:248.00px;font-size:11.5px;color:#222;transform:scaleX(0.9148);transform-origin:0 0;">Origin</div>
<div class="abs" style="left:58px;top:267px;width:103px;height:20px;background:#f0f0f0"></div>
<svg class="abs" style="left:36px;top:266px" width="16" height="20" viewBox="0 0 384 480"><defs><linearGradient id="tdg" x1="0" y1="0" x2="1" y2="1"><stop offset=".35" stop-color="#fafafa"/><stop offset=".7" stop-color="#a0a0a0"/><stop offset="1" stop-color="#404040"/></linearGradient></defs><path d="M75 390L325 130V395Z" fill="url(#tdg)"/><path d="M75 390L325 130" stroke="#2a2a2a" stroke-width="16"/><path d="M325 125V395H70" stroke="#111" stroke-width="30" fill="none"/></svg>
<svg class="abs" style="left:61px;top:269px" width="16" height="16" viewBox="0 0 16 16"><path d="M0.3 8C2.5 4.6 5 3.3 8 3.3S13.5 4.6 15.7 8C13.5 11.4 11 12.7 8 12.7S2.5 11.4 0.3 8z" fill="#8e8e8e"/><circle cx="8" cy="8" r="2.8" fill="#efefef"/><circle cx="8" cy="8" r="1.6" fill="#8e8e8e"/></svg>
<svg class="abs" style="left:86px;top:269px" width="16" height="16" viewBox="0 0 16 16"><path d="M0 2h6l1 1.5h9V15H0z" fill="#8f8f8f"/><path d="M0 4.5h16" stroke="#f0f0f0" stroke-width=".6"/></svg>
<div class="t" style="left:115.90px;top:272.00px;font-size:11.5px;color:#222;transform:scaleX(0.9149);transform-origin:0 0;">Bodies</div>
<div class="abs" style="left:76px;top:291px;width:99px;height:20px;background:#f0f0f0"></div>
<svg class="abs" style="left:79px;top:293px" width="16" height="16" viewBox="0 0 16 16"><path d="M0.3 8C2.5 4.6 5 3.3 8 3.3S13.5 4.6 15.7 8C13.5 11.4 11 12.7 8 12.7S2.5 11.4 0.3 8z" fill="#8e8e8e"/><circle cx="8" cy="8" r="2.8" fill="#efefef"/><circle cx="8" cy="8" r="1.6" fill="#8e8e8e"/></svg>
<svg class="abs" style="left:103.7px;top:292px" width="17" height="17" viewBox="0 0 17 17"><defs><linearGradient id="bg1" x1="0" x2="1"><stop offset="0" stop-color="#fff"/><stop offset=".5" stop-color="#d8dbe0"/><stop offset="1" stop-color="#fff"/></linearGradient></defs><rect x="1" y="1" width="14.5" height="14.5" rx="3.5" fill="url(#bg1)" stroke="#333" stroke-width="1"/><path d="M3 5.5h10.5" stroke="#fff" stroke-width="1.8"/></svg>
<div class="t" style="left:134.40px;top:296.00px;font-size:11.5px;color:#222;transform:scaleX(0.9469);transform-origin:0 0;">Body2</div>
<div class="abs" style="left:76px;top:315px;width:99px;height:20px;background:#f0f0f0"></div>
<svg class="abs" style="left:79px;top:317px" width="16" height="16" viewBox="0 0 16 16"><path d="M0.3 8C2.5 4.6 5 3.3 8 3.3S13.5 4.6 15.7 8C13.5 11.4 11 12.7 8 12.7S2.5 11.4 0.3 8z" fill="#8e8e8e"/><circle cx="8" cy="8" r="2.8" fill="#efefef"/><circle cx="8" cy="8" r="1.6" fill="#8e8e8e"/></svg>
<svg class="abs" style="left:103.7px;top:316px" width="17" height="17" viewBox="0 0 17 17"><defs><linearGradient id="bg1" x1="0" x2="1"><stop offset="0" stop-color="#fff"/><stop offset=".5" stop-color="#d8dbe0"/><stop offset="1" stop-color="#fff"/></linearGradient></defs><rect x="1" y="1" width="14.5" height="14.5" rx="3.5" fill="url(#bg1)" stroke="#333" stroke-width="1"/><path d="M3 5.5h10.5" stroke="#fff" stroke-width="1.8"/></svg>
<div class="t" style="left:134.40px;top:320.00px;font-size:11.5px;color:#222;transform:scaleX(0.9469);transform-origin:0 0;">Body3</div>
<div class="abs" style="left:76px;top:339px;width:25px;height:20px;background:#cfcfcf"></div>
<div class="abs" style="left:101px;top:339px;width:74px;height:20px;background:#0696d7"></div>
<svg class="abs" style="left:79px;top:341px" width="16" height="16" viewBox="0 0 16 16"><path d="M0.8 8C2.8 4.9 5.2 3.7 8 3.7S13.2 4.9 15.2 8C13.2 11.1 10.8 12.3 8 12.3S2.8 11.1 0.8 8z" fill="none" stroke="#8e8e8e" stroke-width="1"/><circle cx="8" cy="8" r="2.4" fill="none" stroke="#8e8e8e" stroke-width="1"/><path d="M3.5 2.5l9.5 11" stroke="#8e8e8e" stroke-width="1"/></svg>
<svg class="abs" style="left:103.7px;top:340px" width="17" height="17" viewBox="0 0 17 17"><defs><linearGradient id="bg1" x1="0" x2="1"><stop offset="0" stop-color="#fff"/><stop offset=".5" stop-color="#d8dbe0"/><stop offset="1" stop-color="#fff"/></linearGradient></defs><rect x="1" y="1" width="14.5" height="14.5" rx="3.5" fill="url(#bg1)" stroke="#333" stroke-width="1"/><path d="M3 5.5h10.5" stroke="#fff" stroke-width="1.8"/></svg>
<div class="t" style="left:134.40px;top:344.00px;font-size:11.5px;color:#fff;transform:scaleX(0.9183);transform-origin:0 0;">Body4</div>
<div class="abs" style="left:76px;top:363px;width:99px;height:20px;background:#f0f0f0"></div>
<svg class="abs" style="left:79px;top:365px" width="16" height="16" viewBox="0 0 16 16"><path d="M0.8 8C2.8 4.9 5.2 3.7 8 3.7S13.2 4.9 15.2 8C13.2 11.1 10.8 12.3 8 12.3S2.8 11.1 0.8 8z" fill="none" stroke="#8e8e8e" stroke-width="1"/><circle cx="8" cy="8" r="2.4" fill="none" stroke="#8e8e8e" stroke-width="1"/><path d="M3.5 2.5l9.5 11" stroke="#8e8e8e" stroke-width="1"/></svg>
<svg class="abs" style="left:103.7px;top:364px" width="17" height="17" viewBox="0 0 17 17"><defs><linearGradient id="bg1" x1="0" x2="1"><stop offset="0" stop-color="#fff"/><stop offset=".5" stop-color="#d8dbe0"/><stop offset="1" stop-color="#fff"/></linearGradient></defs><rect x="1" y="1" width="14.5" height="14.5" rx="3.5" fill="url(#bg1)" stroke="#333" stroke-width="1"/><path d="M3 5.5h10.5" stroke="#fff" stroke-width="1.8"/></svg>
<div class="t" style="left:134.40px;top:368.00px;font-size:11.5px;color:#222;transform:scaleX(0.9469);transform-origin:0 0;">Body5</div>
<div class="abs" style="left:4px;top:953px;width:300px;height:25px;background:#f2f2f2;border:1px solid #c9c9c9"></div>
<div class="t" style="left:29.50px;top:960.00px;font-size:11px;color:#555;transform:scaleX(0.8813);transform-origin:0 0;">COMMENTS</div>
<svg class="abs" style="left:282px;top:960px" width="20" height="11" viewBox="0 0 20 11"><circle cx="5.5" cy="5.5" r="4.6" fill="#222"/><path d="M3 5.5h5M5.5 3v5" stroke="#fff" stroke-width="1.5"/><path d="M17.5 1v9M19.5 2v7" stroke="#555" stroke-width=".8"/></svg>
<div class="abs" style="left:841px;top:954px;width:236px;height:24px;background:#f2f2f2"></div>
<svg class="abs" style="left:840px;top:950px" width="120" height="30" viewBox="0 0 1920 480">
<path d="M300 290C335 245 290 222 200 225C110 228 55 252 65 275" stroke="#333" stroke-width="20" fill="none"/>
<path d="M95 315L165 268L168 352Z" fill="#222"/>
<path d="M185 370V178H152L200 125L248 178H215V370Z" fill="#fff" stroke="#333" stroke-width="20"/>
<path d="M400 225H495L447 282Z" fill="#222"/>
<path d="M622 200L690 135L688 182L785 152V205Z" fill="#9aa3ad" stroke="#555" stroke-width="8"/>
<path d="M600 215H840V375H600Z" fill="#fafafa" stroke="#3a3a3a" stroke-width="24"/>
<path d="M648 268H792V328H648Z" fill="#b6c2d2" stroke="#3a3a3a" stroke-width="18"/>
<path d="M1100 375C1060 340 1022 292 1015 258C1030 240 1062 252 1080 272V172C1080 140 1112 140 1116 166V140C1122 118 1152 118 1160 142V146C1170 126 1200 126 1206 152V188C1216 166 1252 170 1256 196V292C1250 332 1216 375 1180 378Z" fill="#e6eaee" stroke="#333" stroke-width="18"/>
<path d="M1116 166V232M1160 142V230M1206 152V232" stroke="#333" stroke-width="14"/>
<circle cx="1500" cy="235" r="78" fill="#dcecf0" stroke="#333" stroke-width="22"/>
<path d="M1560 295L1605 342" stroke="#333" stroke-width="46" stroke-linecap="round"/>
<path d="M1640 128V192M1608 160H1672M1600 236H1676" stroke="#333" stroke-width="18"/></svg>
<svg class="abs" style="left:950px;top:950px" width="130" height="30" viewBox="0 0 1920.1 443.1">
<path d="M80 122H305V345H80Z" stroke="#333" stroke-width="16" stroke-dasharray="40 34" fill="none"/>
<circle cx="170" cy="205" r="90" fill="#e0eef0" stroke="#333" stroke-width="22"/>
<path d="M232 272L290 330" stroke="#333" stroke-width="46" stroke-linecap="round"/>
<path d="M385 210H470L428 262Z" fill="#222"/>
<rect x="565" y="125" width="230" height="178" rx="14" fill="#fdfdfd" stroke="#444" stroke-width="16"/>
<rect x="597" y="152" width="168" height="120" rx="8" fill="#9dbbe0" stroke="#24417a" stroke-width="18"/>
<path d="M640 305H722L732 342H630Z" fill="#fff" stroke="#444" stroke-width="14"/>
<path d="M830 215H915L873 267Z" fill="#222"/>
<defs><linearGradient id="ngg" x1="0" y1="0" x2="0" y2="1"><stop offset="0" stop-color="#5a5a5a"/><stop offset="1" stop-color="#3a3a3a"/></linearGradient>
<linearGradient id="ngw" x1="0" y1="0" x2="0" y2="1"><stop offset="0" stop-color="#fff"/><stop offset=".55" stop-color="#f0f0f0"/><stop offset="1" stop-color="#8a8a8a"/></linearGradient></defs>
<rect x="1020" y="122" width="235" height="230" rx="14" fill="url(#ngg)"/>
<path d="M1036 136h30v30h-30zM1036 181h30v30h-30zM1036 226h30v30h-30zM1036 271h30v30h-30zM1036 316h30v30h-30zM1081 136h30v30h-30zM1081 181h30v30h-30zM1081 226h30v30h-30zM1081 271h30v30h-30zM1081 316h30v30h-30zM1126 136h30v30h-30zM1126 181h30v30h-30zM1126 226h30v30h-30zM1126 271h30v30h-30zM1126 316h30v30h-30zM1171 136h30v30h-30zM1171 181h30v30h-30zM1171 226h30v30h-30zM1171 271h30v30h-30zM1171 316h30v30h-30zM1216 136h30v30h-30zM1216 181h30v30h-30zM1216 226h30v30h-30zM1216 271h30v30h-30zM1216 316h30v30h-30z" fill="url(#ngw)"/>
<path d="M1285 215H1370L1328 267Z" fill="#222"/>
<g fill="#a6bfe3" stroke="#24437f" stroke-width="16"><rect x="1482" y="138" width="102" height="92" rx="12"/><rect x="1590" y="138" width="102" height="92" rx="12"/><rect x="1482" y="232" width="102" height="90" rx="12"/><rect x="1590" y="232" width="102" height="90" rx="12"/></g>
<g fill="#c6d6ee" stroke="#7a96c4" stroke-width="6"><rect x="1510" y="168" width="46" height="32"/><rect x="1618" y="168" width="46" height="32"/><rect x="1510" y="260" width="46" height="32"/><rect x="1618" y="260" width="46" height="32"/></g>
<path d="M1745 215H1830L1788 267Z" fill="#222"/></svg>
<div class="abs" style="left:0;top:982px;width:1920px;height:50px;background:#f1f1f1;border-top:1px solid #c6c6c6"></div>
<svg class="abs" style="left:11px;top:1001px" width="13" height="14" viewBox="0 0 13 14"><rect x="0" y="0" width="2" height="14" fill="#444"/><path d="M12 0v14L3 7z" fill="#444"/></svg>
<svg class="abs" style="left:35px;top:1001px" width="14" height="14" viewBox="0 0 14 14"><path d="M9 0v14L0 7z" fill="#444"/><rect x="10.5" y="4.5" width="2" height="5" fill="#444"/></svg>
<svg class="abs" style="left:61px;top:1000px" width="12" height="16" viewBox="0 0 12 16"><path d="M0 0v16l12-8z" fill="#444"/></svg>
<svg class="abs" style="left:85px;top:1001px" width="14" height="14" viewBox="0 0 14 14"><path d="M4 0v14l9-7z" fill="#444"/><rect x="0.5" y="4.5" width="2" height="5" fill="#444"/></svg>
<svg class="abs" style="left:111px;top:1001px" width="13" height="14" viewBox="0 0 13 14"><rect x="11" y="0" width="2" height="14" fill="#444"/><path d="M0 0v14l9-7z" fill="#444"/></svg>
<svg class="abs" style="left:140px;top:990px" width="180" height="40" viewBox="0 0 1920.06 426.68"><path d="M65 130V230Q65 265 150 265Q235 265 235 230V130Z" fill="#6aafe6"/><ellipse cx="150" cy="130" rx="85" ry="34" fill="#8ccaf7"/><path d="M321 130V230Q321 265 406 265Q491 265 491 230V130Z" fill="#6aafe6"/><ellipse cx="406" cy="130" rx="85" ry="34" fill="#8ccaf7"/><path d="M575 125H675V232H575Z" fill="#6aafe6"/><path d="M575 125L605 95H705L675 125Z" fill="#8ccaf7"/><path d="M675 125L705 95V200L675 232Z" fill="#4596d4"/><path d="M575 245H680L705 218V232L678 262H575Z" fill="#b9b9b9"/><path d="M733 232V118" stroke="#222" stroke-width="14"/><path d="M710 135L733 100L756 135Z" fill="#222"/><path d="M831 125H931V232H831Z" fill="#6aafe6"/><path d="M831 125L861 95H961L931 125Z" fill="#8ccaf7"/><path d="M931 125L961 95V200L931 232Z" fill="#4596d4"/><path d="M831 245H936L961 218V232L934 262H831Z" fill="#b9b9b9"/><path d="M989 232V118" stroke="#222" stroke-width="14"/><path d="M966 135L989 100L1012 135Z" fill="#222"/><path d="M1090 190L1180 97H1205Q1255 110 1255 170V262H1135Q1090 245 1090 210Z" fill="#f4f4f4" stroke="#555" stroke-width="14"/><path d="M1112 232L1212 132Q1250 150 1249 175V256H1138Z" fill="#d9d9d9"/><path d="M1095 168L1160 100L1197 137L1132 203Z" fill="#6aafe6"/><path d="M1346 190L1436 97H1461Q1511 110 1511 170V262H1391Q1346 245 1346 210Z" fill="#f4f4f4" stroke="#555" stroke-width="14"/><path d="M1368 232L1468 132Q1506 150 1505 175V256H1394Z" fill="#d9d9d9"/><path d="M1351 168L1416 100L1453 137L1388 203Z" fill="#6aafe6"/><path d="M1602 190L1692 97H1717Q1767 110 1767 170V262H1647Q1602 245 1602 210Z" fill="#f4f4f4" stroke="#555" stroke-width="14"/><path d="M1624 232L1724 132Q1762 150 1761 175V256H1650Z" fill="#d9d9d9"/><path d="M1607 168L1672 100L1709 137L1644 203Z" fill="#6aafe6"/>
<path d="M155 300V362H1690V300M405 300V362M660 300V362M915 300V362M1170 300V362M1425 300V362" stroke="#c9c9c9" stroke-width="17" fill="none"/>
<path d="M1750 35H1878V72L1826 122V370H1800V122L1750 72Z" fill="#5e5e5e"/></svg>
<svg class="abs" style="left:1890px;top:1000px" width="17" height="17" viewBox="0 0 17 17"><g transform="translate(8.5 8.5)"><circle r="5.5" fill="#777"/><g fill="#777"><rect x="-1.5" y="-8" width="3" height="4" transform="rotate(0)"/><rect x="-1.5" y="-8" width="3" height="4" transform="rotate(45)"/><rect x="-1.5" y="-8" width="3" height="4" transform="rotate(90)"/><rect x="-1.5" y="-8" width="3" height="4" transform="rotate(135)"/><rect x="-1.5" y="-8" width="3" height="4" transform="rotate(180)"/><rect x="-1.5" y="-8" width="3" height="4" transform="rotate(225)"/><rect x="-1.5" y="-8" width="3" height="4" transform="rotate(270)"/><rect x="-1.5" y="-8" width="3" height="4" transform="rotate(315)"/></g><circle r="2.3" fill="#f1f1f1"/></g></svg>
<div class="abs" style="left:0;top:1032px;width:1920px;height:48px;background:#1f1f1f"></div>
<div class="abs" style="left:1250px;top:1034px;width:38px;height:42px;background:#2e2e2e;border-radius:5px;box-shadow:2px 0 0 #262626,3px 0 0 #1c1c1c,5px 0 0 #2a2a2a"></div>
<svg class="abs" style="left:597px;top:1044px" width="24" height="24" viewBox="0 0 24 24"><defs><linearGradient id="ws" x1="0" y1="0" x2="1" y2="1"><stop offset="0" stop-color="#5fd3ff"/><stop offset="1" stop-color="#1a8fe0"/></linearGradient></defs><rect x="0" y="0" width="11" height="11" rx="1" fill="url(#ws)"/><rect x="12.5" y="0" width="11" height="11" rx="1" fill="url(#ws)"/><rect x="0" y="12.5" width="11" height="11" rx="1" fill="url(#ws)"/><rect x="12.5" y="12.5" width="11" height="11" rx="1" fill="url(#ws)"/></svg>
<svg class="abs" style="left:641px;top:1044px" width="24" height="24" viewBox="0 0 24 24"><circle cx="13.5" cy="9.5" r="7.5" fill="#444" stroke="#eee" stroke-width="2"/><path d="M8 15l-6 7" stroke="#eee" stroke-width="2.6" stroke-linecap="round"/></svg>
<svg class="abs" style="left:685px;top:1044px" width="24" height="24" viewBox="0 0 24 24"><rect x="0" y="6" width="16" height="15" rx="1.5" fill="#6a6a6a"/><rect x="7" y="0" width="17" height="16" rx="1.5" fill="#f2f2f2"/><rect x="7" y="6" width="9" height="10" fill="#bdbdbd"/></svg>
<svg class="abs" style="left:729px;top:1044px" width="24" height="24" viewBox="0 0 24 24"><rect x="0" y="0" width="24" height="24" rx="2" fill="#1a5fb4"/><rect x="2" y="2" width="9" height="20" rx="1" fill="#f2f2f2"/><rect x="13" y="2" width="9" height="9" fill="#5ec7ff"/><rect x="13" y="13" width="9" height="3.5" fill="#2aa7ff"/><rect x="13" y="18" width="9" height="4" fill="#2aa7ff"/></svg>
<svg class="abs" style="left:772px;top:1044px" width="24" height="24" viewBox="0 0 24 24"><circle cx="12" cy="11.5" r="11.5" fill="#7b6fe0"/><path d="M3 22l2-6 4 4z" fill="#7b6fe0"/><rect x="6" y="7.5" width="9" height="8" rx="1.5" fill="#fff"/><path d="M15.5 11l4-3v7z" fill="#fff"/></svg>
<svg class="abs" style="left:817px;top:1044px" width="24" height="24" viewBox="0 0 24 24"><path d="M0 3h9l2 2h13v17H0z" fill="#f5b21c"/><path d="M0 7h24v15H0z" fill="#ffd04a"/><rect x="7" y="15" width="10" height="7" rx="1" fill="#1e78d0"/></svg>
<svg class="abs" style="left:861px;top:1044px" width="24" height="24" viewBox="0 0 24 24"><circle cx="12" cy="12" r="10.5" fill="#3ebd54" stroke="#fff" stroke-width="1.2"/><path d="M2 23l1.5-5 3.5 3z" fill="#fff"/><path d="M8 7c-1 1-1 3 1 5.5s4.5 4 5.5 4c1.2 0 2-.8 2-1.5l-2-1.5-1.2 1c-1 0-3.5-2.5-3.5-3.5l1-1.2-1.5-2c-.7 0-1.3.2-1.3.2z" fill="#fff"/></svg>
<div class="abs" style="left:874px;top:1039px;width:16px;height:16px;border-radius:50%;background:#e8202a"></div>
<div class="t" style="left:879.50px;top:1042.00px;font-size:11px;color:#fff;transform:scaleX(0.7500);transform-origin:0 0;">1</div>
<svg class="abs" style="left:905px;top:1044px" width="24" height="24" viewBox="0 0 24 24"><defs><linearGradient id="ed" x1="0" y1="0" x2="1" y2="1"><stop offset="0" stop-color="#50e27a"/><stop offset=".5" stop-color="#1aa0e8"/><stop offset="1" stop-color="#0b5cc0"/></linearGradient></defs><circle cx="12" cy="12" r="12" fill="url(#ed)"/><path d="M6 14c0-4 3-6 6-6s5 2 5 4H9c0 3 3 5 7 5 2 0 4-1 5-2-1 4-5 8-10 8-4 0-7-3-5-9z" fill="#0d3f8a"/></svg>
<svg class="abs" style="left:948px;top:1044px" width="24" height="24" viewBox="0 0 24 24"><rect x="0" y="3" width="24" height="18" fill="#111" stroke="#777" stroke-width="1"/><path d="M3 7h2M6 7h2l-1 3M10 9h3" stroke="#ccc" stroke-width="1"/><path d="M15 13h6" stroke="#ddd" stroke-width="1"/></svg>
<svg class="abs" style="left:992px;top:1044px" width="24" height="24" viewBox="0 0 24 24"><rect x="0" y="0" width="24" height="24" rx="2" fill="#fb7a24"/><path d="M7 6c2 0 3 2 5 3 2-1 3-3 5-3 2 0 3 2 2 4l-3 2 3 2c1 2 0 4-2 4-2 0-3-2-5-3-2 1-3 3-5 3s-3-2-2-4l3-2-3-2c-1-2 0-4 2-4z" fill="none" stroke="#fff" stroke-width="2"/></svg>
<svg class="abs" style="left:1036px;top:1044px" width="24" height="24" viewBox="0 0 24 24"><circle cx="12" cy="12" r="12" fill="#e33b2e"/><path d="M12 12L22.4 6A12 12 0 0 1 12 24z" fill="#2da94f"/><path d="M12 12L12 24A12 12 0 0 1 1.6 6z" fill="#fcc419"/><path d="M12 12L1.6 6A12 12 0 0 1 22.4 6z" fill="#e33b2e"/><circle cx="12" cy="12" r="5.5" fill="#fff"/><circle cx="12" cy="12" r="4.2" fill="#3b7ff2"/></svg>
<svg class="abs" style="left:1080px;top:1044px" width="24" height="24" viewBox="0 0 24 24"><circle cx="12" cy="12" r="12" fill="#3fa066"/><g fill="none" stroke="#d2f5df" stroke-width="1"><ellipse cx="12" cy="12" rx="9" ry="3.5"/><ellipse cx="12" cy="12" rx="9" ry="3.5" transform="rotate(60 12 12)"/><ellipse cx="12" cy="12" rx="9" ry="3.5" transform="rotate(-60 12 12)"/></g><circle cx="12" cy="12" r="1.5" fill="#d2f5df"/></svg>
<svg class="abs" style="left:1124px;top:1044px" width="24" height="24" viewBox="0 0 24 24"><path d="M12 0l11 5v14l-11 5L1 19V5z" fill="#1e5fb8"/><path d="M12 5l7 3v8l-7 3-7-3V8z" fill="#f6a623"/><path d="M5 8l7 3 7-3M12 11v8" stroke="#c27400" stroke-width="1" fill="none"/></svg>
<svg class="abs" style="left:1168px;top:1044px" width="24" height="24" viewBox="0 0 24 24"><circle cx="12" cy="12" r="12" fill="#f5f5f5"/><g stroke-width="3.2" stroke-linecap="round"><path d="M9 4v6" stroke="#36c5f0"/><path d="M4 15h6" stroke="#e01e5a"/><path d="M15 20v-6" stroke="#ecb22e"/><path d="M20 9h-6" stroke="#2eb67d"/><path d="M4 9h2" stroke="#36c5f0"/><path d="M15 4v2" stroke="#2eb67d"/><path d="M20 15h-2" stroke="#ecb22e"/><path d="M9 20v-2" stroke="#e01e5a"/></g></svg>
<svg class="abs" style="left:1212px;top:1044px" width="24" height="24" viewBox="0 0 24 24"><path d="M12 1l10 11-3 2-3-2-4 6-4-6-3 2-3-2z" fill="#111" stroke="#ddd" stroke-width="1"/><path d="M9 5l3-3 3 3-3 1z" fill="#fff"/><path d="M3 17c3 2 15 2 18 0" stroke="#eee" stroke-width="1.2" fill="none"/></svg>
<svg class="abs" style="left:1256px;top:1044px" width="24" height="24" viewBox="0 0 24 24"><defs><linearGradient id="fu" x1="0" y1="0" x2="1" y2="1"><stop offset="0" stop-color="#fff3e6"/><stop offset="1" stop-color="#f6d2ac"/></linearGradient><linearGradient id="fu2" x1="0" y1="0" x2="1" y2="1"><stop offset="0" stop-color="#f0a040"/><stop offset=".6" stop-color="#d8731f"/><stop offset="1" stop-color="#a9501a"/></linearGradient></defs><rect x="0" y="0" width="24" height="24" fill="url(#fu)"/><path d="M7 3.5h10.5a1.5 1.5 0 0 1 0 3H11v3.5h5.5a1.5 1.5 0 0 1 0 3H11v5a2 2 0 0 1-4 0z" fill="url(#fu2)"/><rect x="15" y="19.5" width="5" height="2" fill="#f0a868"/></svg>
<div class="abs" style="left:1260px;top:1075px;width:17px;height:3px;border-radius:2px;background:#4cc2ff"></div>
<svg class="abs" style="left:1300px;top:1044px" width="24" height="24" viewBox="0 0 24 24"><g transform="translate(12 12)"><circle r="8" fill="#9aa3ad"/><g fill="#9aa3ad"><rect x="-2.2" y="-12" width="4.4" height="6" transform="rotate(0)"/><rect x="-2.2" y="-12" width="4.4" height="6" transform="rotate(45)"/><rect x="-2.2" y="-12" width="4.4" height="6" transform="rotate(90)"/><rect x="-2.2" y="-12" width="4.4" height="6" transform="rotate(135)"/><rect x="-2.2" y="-12" width="4.4" height="6" transform="rotate(180)"/><rect x="-2.2" y="-12" width="4.4" height="6" transform="rotate(225)"/><rect x="-2.2" y="-12" width="4.4" height="6" transform="rotate(270)"/><rect x="-2.2" y="-12" width="4.4" height="6" transform="rotate(315)"/></g><circle r="5" fill="#1f1f1f"/><circle r="4" fill="#2b7de0"/></g></svg>
<div class="abs" style="left:825px;top:1072px;width:7px;height:3px;border-radius:2px;background:#9a9a9a"></div>
<div class="abs" style="left:869px;top:1072px;width:7px;height:3px;border-radius:2px;background:#9a9a9a"></div>
<div class="abs" style="left:1044px;top:1072px;width:7px;height:3px;border-radius:2px;background:#9a9a9a"></div>
<div class="abs" style="left:1309px;top:1072px;width:7px;height:3px;border-radius:2px;background:#9a9a9a"></div>
<svg class="abs" style="left:1639px;top:1050px" width="14" height="9" viewBox="0 0 14 9"><path d="M1 8l6-6 6 6" stroke="#eee" stroke-width="1.3" fill="none"/></svg>
<svg class="abs" style="left:1669px;top:1046px" width="18" height="18" viewBox="0 0 18 18"><path d="M2 9a6.5 6.5 0 0 1 12-3M14 2v4h-4M4 15l-2-2h3" stroke="#eee" stroke-width="1.2" fill="none"/><circle cx="12.5" cy="13.5" r="3.4" fill="#f59b0a"/></svg>
<div class="t" style="left:1704.40px;top:1044.00px;font-size:11.5px;color:#fff;transform:scaleX(0.9249);transform-origin:0 0;">ENG</div>
<div class="t" style="left:1708.75px;top:1060.00px;font-size:11.5px;color:#fff;transform:scaleX(0.8801);transform-origin:0 0;">US</div>
<svg class="abs" style="left:1745px;top:1049px" width="17" height="14" viewBox="0 0 17 14"><path d="M1 5a10 10 0 0 1 15 0M3.5 7.5a6.5 6.5 0 0 1 10 0M6 10a3 3 0 0 1 5 0" stroke="#fff" stroke-width="1.3" fill="none"/><circle cx="8.5" cy="12.3" r="1.2" fill="#fff"/></svg>
<svg class="abs" style="left:1769px;top:1048px" width="17" height="16" viewBox="0 0 17 16"><path d="M1 5.5h3l4-3.5v12l-4-3.5H1z" fill="none" stroke="#fff" stroke-width="1.1"/><path d="M10.5 5.5a3 3 0 0 1 0 5M12.5 3.5a6 6 0 0 1 0 9" stroke="#fff" stroke-width="1.1" fill="none"/><path d="M14.5 2a8.5 8.5 0 0 1 0 12" stroke="#777" stroke-width="1" fill="none"/></svg>
<svg class="abs" style="left:1794px;top:1047px" width="17" height="16" viewBox="0 0 17 16"><rect x="5" y="4" width="10" height="9" rx="1" fill="none" stroke="#fff" stroke-width="1.1"/><rect x="15" y="7" width="1.5" height="3" fill="#fff"/><rect x="6.5" y="6.5" width="5" height="5" fill="#fff"/><path d="M2 1v3M4 1v3M1 4h4v3l-1 2v5" stroke="#fff" stroke-width="1" fill="none"/></svg>
<div class="t" style="left:1834.00px;top:1043.00px;font-size:11.5px;color:#fff;">7:34 PM</div>
<div class="t" style="left:1825.00px;top:1059.00px;font-size:11.5px;color:#fff;transform:scaleX(1.0268);transform-origin:0 0;">2/11/2022</div>
<div class="abs" style="left:1884px;top:1048px;width:16px;height:16px;border-radius:50%;background:#4cc2ff"></div>
<div class="t" style="left:1889.50px;top:1051.00px;font-size:11px;color:#111;transform:scaleX(0.9167);transform-origin:0 0;">7</div>
</body></html>
